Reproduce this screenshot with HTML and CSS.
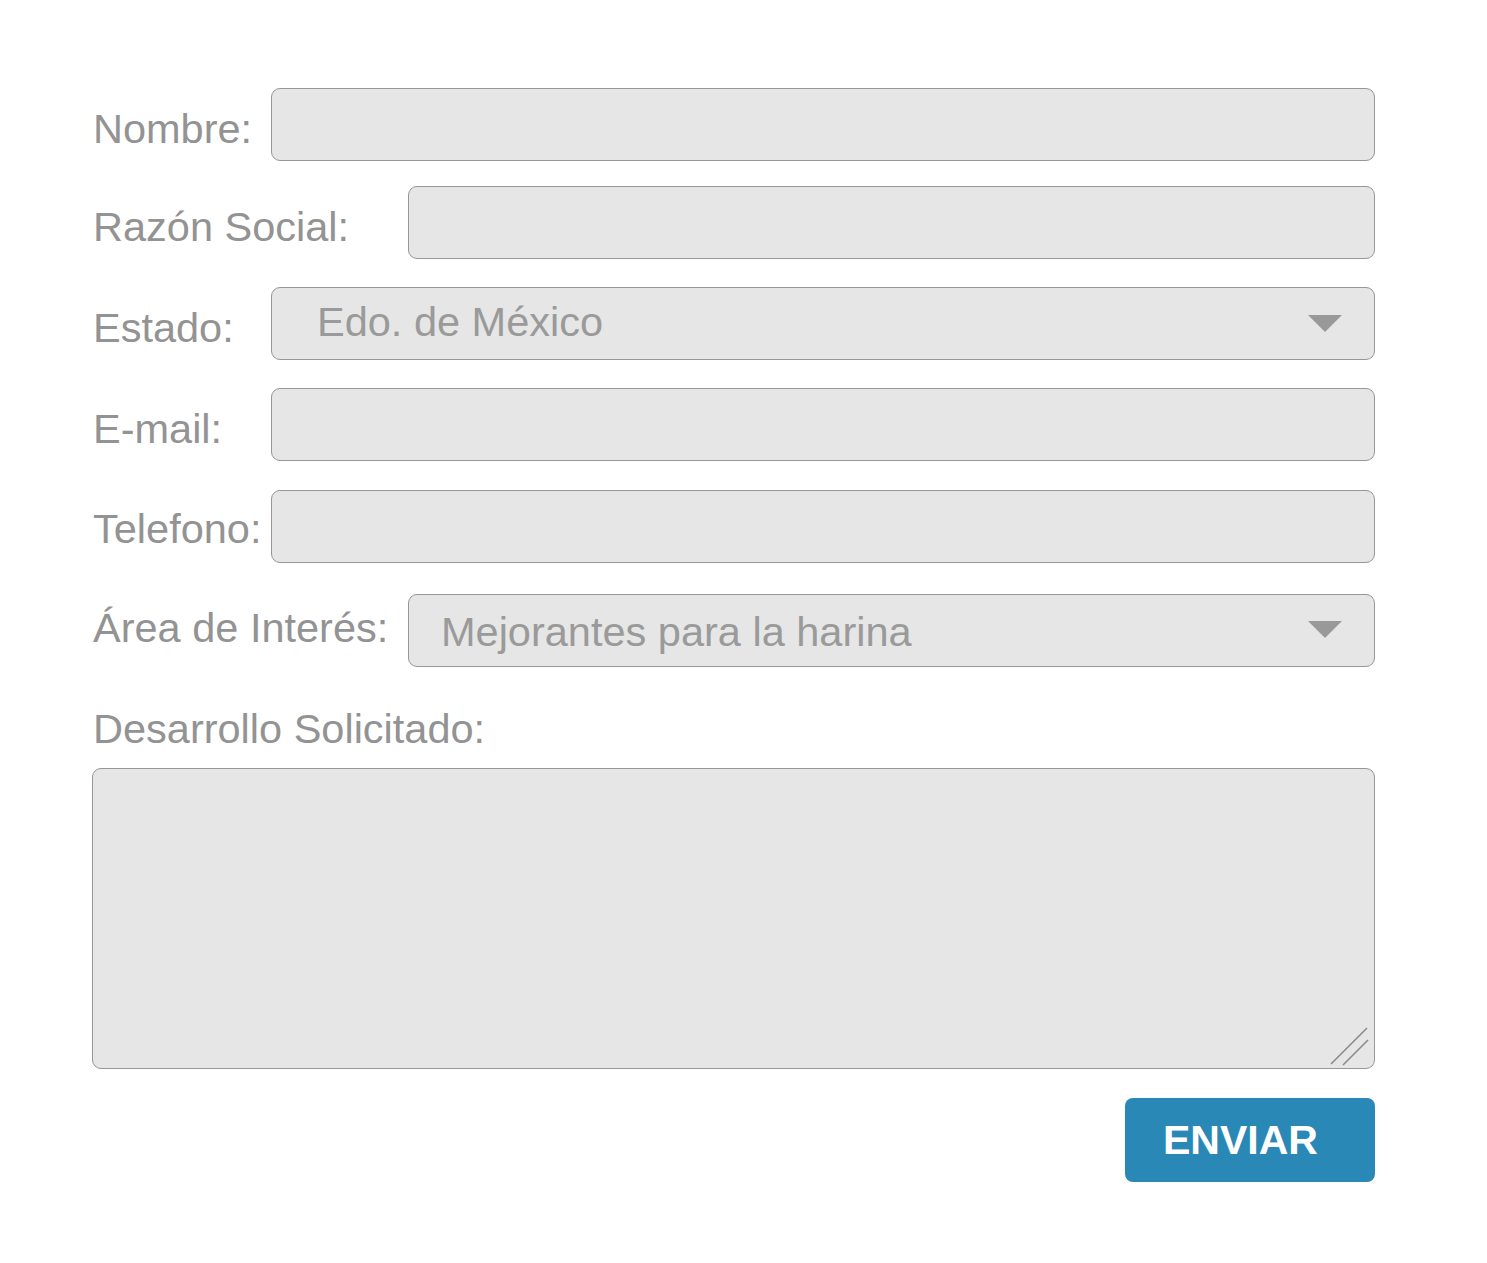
FILE: index.html
```html
<!DOCTYPE html>
<html lang="es">
<head>
<meta charset="utf-8">
<title>Formulario</title>
<link rel="stylesheet" href="styles.css">
</head>
<body>
<form class="form">
  <div class="row">
    <label class="label">Nombre:</label>
    <input class="field" type="text">
  </div>
  <div class="row row-2">
    <label class="label label-wide">Razón Social:</label>
    <input class="field" type="text">
  </div>
  <div class="row row-3">
    <label class="label">Estado:</label>
    <div class="select-wrap">
      <select class="field select select-estado"><option>Edo. de México</option></select>
      <svg class="arrow" width="34" height="17" viewBox="0 0 34 17"><polygon points="0,0 34,0 17,17" fill="#999"/></svg>
    </div>
  </div>
  <div class="row row-4">
    <label class="label">E-mail:</label>
    <input class="field" type="text">
  </div>
  <div class="row row-5">
    <label class="label label-up">Telefono:</label>
    <input class="field" type="text">
  </div>
  <div class="row row-6">
    <label class="label label-wide label-top">Área de Interés:</label>
    <div class="select-wrap">
      <select class="field select select-area"><option>Mejorantes para la harina</option></select>
      <svg class="arrow" width="34" height="17" viewBox="0 0 34 17"><polygon points="0,0 34,0 17,17" fill="#999"/></svg>
    </div>
  </div>
  <label class="label label-block">Desarrollo Solicitado:</label>
  <div class="area-wrap">
    <textarea class="field textarea"></textarea>
    <svg class="grip" width="40" height="42" viewBox="0 0 40 42"><line x1="1" y1="40" x2="37" y2="4" stroke="#8a8a8a" stroke-width="1.6"/><line x1="13" y1="41" x2="38" y2="16" stroke="#8a8a8a" stroke-width="1.6"/></svg>
  </div>
  <div class="actions">
    <button class="btn" type="button">ENVIAR</button>
  </div>
</form>
</body>
</html>
```
FILE: styles.css
```css
* { box-sizing: border-box; }
html, body { margin: 0; padding: 0; background: #fff; }
body {
  font-family: "Liberation Sans", Arial, sans-serif;
  color: #939393;
}
.form {
  width: 1283px;
  margin-left: 92px;
  padding-top: 88px;
  display: flex;
  flex-direction: column;
}
.row {
  display: flex;
  align-items: center;
  height: 73px;
}
.row-2 { margin-top: 25px; }
.row-3 { margin-top: 28px; }
.row-4 { margin-top: 28px; }
.row-5 { margin-top: 29px; }
.row-6 { margin-top: 31px; }
.label {
  font-size: 41.5px;
  line-height: 46px;
  width: 179px;
  flex: none;
  padding-left: 1px;
  padding-top: 8px;
  color: #939393;
  white-space: nowrap;
}
.label-wide { width: 316px; }
.label-up { padding-top: 4px; }
.label-top { padding-top: 0; margin-top: -5px; }
.field {
  flex: 1;
  height: 73px;
  background: #e6e6e6;
  border: 1.5px solid #979797;
  border-radius: 9px;
  font-family: "Liberation Sans", Arial, sans-serif;
  font-size: 41.5px;
  color: #9a9a9a;
  outline: none;
  margin: 0;
}
.select-wrap {
  flex: 1;
  position: relative;
  display: flex;
  height: 73px;
}
.select {
  width: 100%;
  appearance: none;
  -webkit-appearance: none;
}
.select-estado { padding: 0 0 4px 45px; }
.select-area { padding: 2px 0 0 32px; }
.arrow {
  position: absolute;
  right: 33px;
  top: 28px;
}
.select-area + .arrow { top: 27px; }
.label-block {
  width: auto;
  padding-top: 0;
  margin-top: 39px;
}
.area-wrap {
  position: relative;
  margin-top: 16px;
  height: 301px;
  display: flex;
}
.textarea {
  width: 100%;
  height: 301px;
  resize: none;
}
.grip {
  position: absolute;
  right: 5px;
  bottom: 3px;
}
.actions {
  display: flex;
  justify-content: flex-end;
  margin-top: 29px;
}
.btn {
  width: 250px;
  height: 84px;
  background: #2a88b6;
  border: none;
  border-radius: 8px;
  color: #fff;
  font-family: "Liberation Sans", Arial, sans-serif;
  font-weight: bold;
  font-size: 41px;
  text-align: left;
  padding: 0 0 0 38px;
  cursor: pointer;
}
```
